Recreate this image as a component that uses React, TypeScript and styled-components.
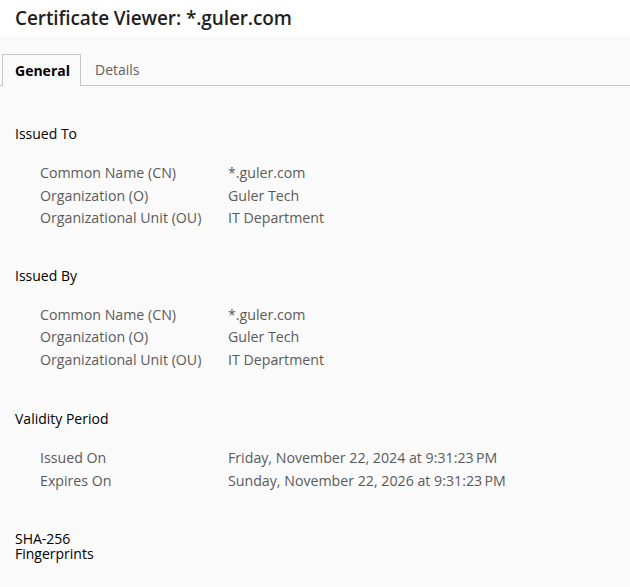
import React from "react";
import styled, { createGlobalStyle } from "styled-components";

const Global = createGlobalStyle`
  html, body { margin: 0; padding: 0; background: #fafafa; }
  body { font-family: "Open Sans", "Noto Sans", sans-serif; }
`;

const Page = styled.div`
  width: 630px;
  height: 587px;
  overflow: hidden;
  background: #fafafa;
  color: #1f1f1f;
`;

const Header = styled.header`
  height: 36px;
  background: #ffffff;
  display: flex;
  align-items: center;
  padding-left: 15px;
`;

const Title = styled.h1`
  margin: 0;
  font-size: 19px;
  font-weight: 600;
  color: #1f1f1f;
  letter-spacing: -0.1px;
`;

const Body = styled.main`
  padding-top: 18px;
`;

const TabBar = styled.nav`
  display: flex;
  align-items: stretch;
  height: 31px;
  padding-left: 2px;
  border-bottom: 1px solid #c6c6c6;
`;

const Tab = styled.div<{ $active?: boolean }>`
  display: flex;
  align-items: center;
  padding: 0 12px;
  font-size: 14px;
  box-sizing: border-box;
  ${(p) =>
    p.$active
      ? `
    font-weight: 700;
    color: #000;
    border: 1px solid #c6c6c6;
    border-bottom: none;
    margin-bottom: -1px;
    background: #fafafa;
    width: 79px;
  `
      : `
    color: #5f5f5f;
    padding-left: 14px;
  `}
`;

const Content = styled.section`
  padding: 0 15px;
`;

const Group = styled.div<{ $gap: number }>`
  margin-top: ${(p) => p.$gap}px;
`;

const Heading = styled.h2<{ $narrow?: boolean }>`
  margin: 0;
  font-size: 14px;
  font-weight: 400;
  color: #000;
  line-height: ${(p) => (p.$narrow ? "15px" : "20px")};
  ${(p) => (p.$narrow ? "width: 90px;" : "")}
`;

const Rows = styled.div`
  margin-top: 18px;
  padding-left: 25px;
  display: grid;
  grid-template-columns: 188px 1fr;
`;

const Label = styled.div`
  font-size: 14.2px;
  line-height: 22.5px;
  color: #5a5a5a;
  white-space: nowrap;
`;

const Value = styled(Label)``;

type Row = [string, string];

const sections: { title: string; gap: number; rows: Row[] }[] = [
  {
    title: "Issued To",
    gap: 38,
    rows: [
      ["Common Name (CN)", "*.guler.com"],
      ["Organization (O)", "Guler Tech"],
      ["Organizational Unit (OU)", "IT Department"],
    ],
  },
  {
    title: "Issued By",
    gap: 36,
    rows: [
      ["Common Name (CN)", "*.guler.com"],
      ["Organization (O)", "Guler Tech"],
      ["Organizational Unit (OU)", "IT Department"],
    ],
  },
  {
    title: "Validity Period",
    gap: 38,
    rows: [
      ["Issued On", "Friday, November 22, 2024 at 9:31:23\u2009PM"],
      ["Expires On", "Sunday, November 22, 2026 at 9:31:23\u2009PM"],
    ],
  },
];

export default function App() {
  return (
    <Page>
      <Global />
      <Header>
        <Title>Certificate Viewer: *.guler.com</Title>
      </Header>
      <Body>
        <TabBar>
          <Tab $active>General</Tab>
          <Tab>Details</Tab>
        </TabBar>
        <Content>
          {sections.map((s) => (
            <Group key={s.title} $gap={s.gap}>
              <Heading>{s.title}</Heading>
              <Rows>
                {s.rows.map(([l, v]) => (
                  <React.Fragment key={l}>
                    <Label>{l}</Label>
                    <Value>{v}</Value>
                  </React.Fragment>
                ))}
              </Rows>
            </Group>
          ))}
          <Group $gap={39}>
            <Heading $narrow>SHA-256 Fingerprints</Heading>
          </Group>
        </Content>
      </Body>
    </Page>
  );
}
